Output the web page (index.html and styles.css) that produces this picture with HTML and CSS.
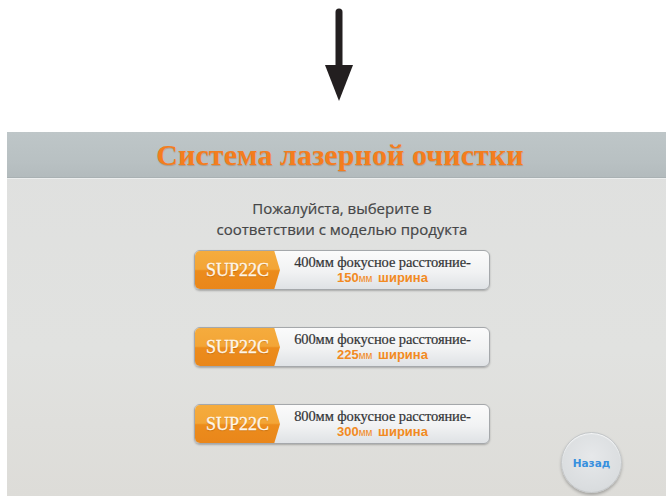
FILE: index.html
```html
<!DOCTYPE html>
<html lang="ru">
<head>
<meta charset="utf-8">
<title>Система лазерной очистки</title>
<link rel="stylesheet" href="styles.css">
</head>
<body>
  <div class="top">
    <svg class="arrow" width="30" height="104" viewBox="0 0 30 104">
      <line x1="15" y1="12" x2="15" y2="70" stroke="#231f20" stroke-width="7" stroke-linecap="round"/>
      <polygon points="1,65 29,65 15,101" fill="#231f20"/>
    </svg>
  </div>

  <div class="screen">
    <header class="bar">
      <h1 class="title">Система лазерной очистки</h1>
    </header>

    <main class="content">
      <p class="prompt">Пожалуйста, выберите в<br>соответствии с моделью продукта</p>

      <ul class="models">
        <li class="model">
          <span class="tag">SUP22C</span>
          <span class="spec">
            <span class="focal">400мм фокусное расстояние-</span>
            <span class="width">150<small>мм</small> ширина</span>
          </span>
        </li>
        <li class="model">
          <span class="tag">SUP22C</span>
          <span class="spec">
            <span class="focal">600мм фокусное расстояние-</span>
            <span class="width">225<small>мм</small> ширина</span>
          </span>
        </li>
        <li class="model">
          <span class="tag">SUP22C</span>
          <span class="spec">
            <span class="focal">800мм фокусное расстояние-</span>
            <span class="width">300<small>мм</small> ширина</span>
          </span>
        </li>
      </ul>
    </main>

    <button class="back">Назад</button>
  </div>
</body>
</html>
```

FILE: styles.css
```css
html, body {
  margin: 0;
  padding: 0;
}

body {
  width: 666px;
  height: 496px;
  overflow: hidden;
  background: #ffffff;
  font-family: "Liberation Serif", serif;
}

/* white strip with the pointer arrow */
.top {
  height: 132px;
  display: flex;
  justify-content: center;
  padding-left: 12px;
  box-sizing: border-box;
}

.arrow {
  display: block;
}

/* the device screen */
.screen {
  position: relative;
  margin-left: 7px;
  width: 666px;
  height: 364px;
  background: linear-gradient(180deg, #dfe0df 0%, #e1e2e0 60%, #dddcd8 100%);
}

.bar {
  height: 45px;
  background: linear-gradient(180deg, #bec6c8 0%, #b8c0c2 70%, #b3bbbd 100%);
  border-bottom: 1px solid #a9b1b3;
  box-shadow: 0 1px 0 #eceeee;
  display: flex;
  align-items: center;
  justify-content: center;
}

.title {
  margin: 0;
  font-family: "Liberation Serif", serif;
  font-weight: bold;
  font-size: 30px;
  letter-spacing: 0.1px;
  color: #f47d1e;
  text-shadow: 0 1px 1px rgba(150, 70, 0, 0.3);
}

.content {
  display: flex;
  flex-direction: column;
  align-items: center;
  padding-left: 4px;
}

.prompt {
  margin: 20px 0 10px;
  font-family: "Open Sans", sans-serif;
  font-size: 15px;
  line-height: 21px;
  color: #454647;
  text-align: center;
  -webkit-text-stroke: 0.2px #454647;
}

.models {
  list-style: none;
  margin: 0;
  padding: 0;
  display: flex;
  flex-direction: column;
  gap: 37px;
}

.model {
  width: 296px;
  height: 40px;
  box-sizing: border-box;
  display: flex;
  border: 1px solid #a5a8ab;
  border-radius: 6px;
  background: linear-gradient(180deg, #fbfbfb 0%, #f1f2f3 55%, #dfe2e5 100%);
  box-shadow: 0 1px 2px rgba(0, 0, 0, 0.25);
  overflow: hidden;
}

.tag {
  width: 86px;
  flex: none;
  display: flex;
  align-items: center;
  padding-left: 12px;
  box-sizing: border-box;
  margin: -1px 0 -1px -1px;
  background: linear-gradient(180deg, #f5ac3e 0%, #f3a536 48%, #ec8c1c 52%, #e9861a 100%);
  clip-path: polygon(0 0, 80px 0, 86px 50%, 80px 100%, 0 100%);
  font-family: "Liberation Serif", serif;
  font-size: 18px;
  color: #fff6e8;
  -webkit-text-stroke: 0.3px #fff6e8;
  text-shadow: 0 1px 1px rgba(140, 70, 0, 0.4);
}

.spec {
  flex: 1;
  display: flex;
  flex-direction: column;
  align-items: center;
  justify-content: center;
  padding-right: 4px;
  font-family: "Liberation Serif", serif;
  line-height: 16px;
}

.focal {
  font-size: 14.5px;
  color: #333436;
  letter-spacing: -0.1px;
  -webkit-text-stroke: 0.2px #333436;
}

.width {
  font-family: "Liberation Sans", sans-serif;
  font-weight: bold;
  font-size: 13px;
  color: #f28a22;
  word-spacing: 2px;
}

.width small {
  font-size: 10px;
  font-weight: normal;
}

/* round back button in the lower right corner */
.back {
  position: absolute;
  left: 554px;
  top: 300px;
  width: 61px;
  height: 61px;
  border-radius: 50%;
  border: 1px solid #c4c7c9;
  background: radial-gradient(circle at 50% 40%, #e6e8ea 0%, #dadddf 70%, #cfd2d4 100%);
  box-shadow: 0 2px 3px rgba(0, 0, 0, 0.25), inset 0 1px 1px #f6f7f8;
  font-family: "DejaVu Sans", sans-serif;
  font-weight: bold;
  font-size: 10.5px;
  color: #3890de;
  padding: 0;
  cursor: pointer;
}
```
